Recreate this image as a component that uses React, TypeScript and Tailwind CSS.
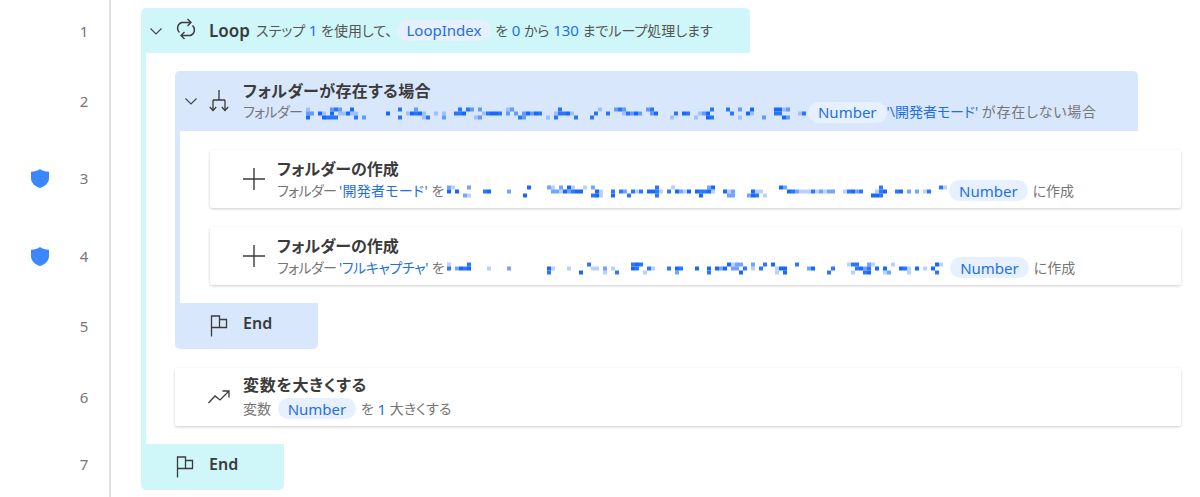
import React from "react";

const FONT = "font-['Noto_Sans','Noto_Sans_CJK_JP',sans-serif]";
const PALT = "[font-feature-settings:'palt']";

// pixelated (redacted) path text, seeded so it stays the same every run
function Mosaic({ width, seed, sparse = [] }: { width: number; seed: number; sparse?: [number, number][] }) {
  const cells: React.ReactNode[] = [];
  let s = seed;
  const rnd = () => {
    s = (s * 16807) % 2147483647;
    return s / 2147483647;
  };
  const step = 4;
  const prev = [false, false, false];
  for (let col = 0; col * step < width - step; col++) {
    const x = col * step;
    const thin = sparse.some(([a, b]) => x >= a && x < b);
    for (let row = 0; row < 3; row++) {
      let chance = row === 1 ? 0.46 : 0.16;
      if (prev[row]) chance += 0.14;
      if (thin) chance *= col % 5 === 0 ? 1.4 : 0.1;
      const on = rnd() < chance;
      prev[row] = on;
      if (on) {
        const o = [0.3, 0.6, 0.9, 1][Math.floor(rnd() * 4)];
        cells.push(<rect key={`${col}-${row}`} x={x} y={1.500 + row * 4} width={step} height={4} fill="#1668ff" opacity={o} />);
      }
    }
  }
  return (
    <svg width={width} height={15} viewBox={`0 0 ${width} 15`} className="inline-block shrink-0">
      {cells}
    </svg>
  );
}

const Pill = ({ children, className = "" }: { children: React.ReactNode; className?: string }) => (
  <span className={`inline-flex items-center h-[21px] rounded-full bg-[#e6f0ff] text-[#1f6fe5] px-[10px] text-[15px] tracking-normal ${className}`}>{children}</span>
);

const Val = ({ children, className = "" }: { children: React.ReactNode; className?: string }) => <span className={`text-[#1f6fe5] ${className}`}>{children}</span>;
const Num = ({ children }: { children: React.ReactNode }) => <span className="text-[#1f6fe5] text-[15px]">{children}</span>;

const Chevron = () => (
  <svg width="14" height="14" viewBox="0 0 14 14" fill="none" stroke="#444" strokeWidth="1.1" className="shrink-0">
    <path d="M1.500 4.500 7 10l5.500-5.500" />
  </svg>
);

const LoopIcon = () => (
  <svg width="22" height="22" viewBox="0 0 22 22" fill="none" stroke="#3b3b3b" strokeWidth="1.4" className="shrink-0">
    <path d="M4.500 14.500A6 6 0 0 1 6.500 4.500h9" />
    <path d="M17.500 7.500A6 6 0 0 1 15.500 17.500h-9" />
    <path d="M12.500 1l3.500 3.500-3.500 3.500M9.500 14l-3.500 3.500 3.500 3.500" />
  </svg>
);

const BranchIcon = () => (
  <svg width="20" height="22" viewBox="0 0 20 22" fill="none" stroke="#3b3b3b" strokeWidth="1.3" className="shrink-0">
    <path d="M10 0v10M4 10h12M4 10v10.500M16 10v10.500" />
    <path d="M.8 17l3.200 3.500L7.200 17M12.800 17l3.200 3.500 3.200-3.500" />
  </svg>
);

const PlusIcon = () => (
  <svg width="22" height="22" viewBox="0 0 22 22" fill="none" stroke="#3b3b3b" strokeWidth="1.4" className="shrink-0">
    <path d="M11 0v22M0 11h22" />
  </svg>
);

const FlagIcon = () => (
  <svg width="18" height="22" viewBox="0 0 18 22" fill="none" stroke="#3b3b3b" strokeWidth="1.3" className="shrink-0">
    <path d="M1.500 21.500V1h8v3.500h7v8h-7V4.500M1.500 12.500h8" />
  </svg>
);

const TrendIcon = () => (
  <svg width="22" height="14" viewBox="0 0 22 14" fill="none" stroke="#3b3b3b" strokeWidth="1.3" className="shrink-0">
    <path d="M.5 13 7 6l5 4 9-9M14.500 1H21v6.500" />
  </svg>
);

const Shield = () => (
  <svg width="18" height="19" viewBox="0 0 18 19" className="shrink-0">
    <path d="M9 0c2.500 1.800 5.300 2.700 9 2.700V9c0 4.500-3.200 8-9 10C3.200 17 0 13.500 0 9V2.700C3.700 2.700 6.500 1.800 9 0z" fill="#3a87ff" />
  </svg>
);

function Gutter() {
  const rows = [
    { n: 1, h: "h-[46px] mt-[8px]" },
    { n: 2, h: "h-[60px] mt-[17px]" },
    { n: 3, h: "h-[57px] mt-[19px]", shield: true },
    { n: 4, h: "h-[59px] mt-[20px]", shield: true },
    { n: 5, h: "h-[46px] mt-[17px]" },
    { n: 6, h: "h-[58px] mt-[19px]" },
    { n: 7, h: "h-[43px] mt-[17px]" },
  ];
  return (
    <div className="w-[111px] shrink-0 border-r-2 border-[#e1e1e1] h-[497px]">
      {rows.map((r) => (
        <div key={r.n} className={`flex items-center ${r.h}`}>
          <div className="w-[31px] shrink-0" />
          <div className="w-[18px] shrink-0 flex">{r.shield && <Shield />}</div>
          <div className="w-[30px] shrink-0" />
          <span className="text-[15px] text-[#767676] w-[10px] text-center">{r.n}</span>
        </div>
      ))}
    </div>
  );
}

const FolderLabel = () => <span className="tracking-[-0.6px] mr-[3px]">フォルダー</span>;

function CreateCard({ name, seed, sparse, nameClass, mosaic }: { name: string; seed: number; sparse: [number, number][]; nameClass: string; mosaic: number }) {
  return (
    <div className="h-[58px] bg-white rounded-[2px] shadow-[0_1px_3px_rgba(0,0,0,0.2)] flex items-center pl-[33px]">
      <PlusIcon />
      <div className="ml-[12px] mt-[1px]">
        <div className={`text-[16px] font-semibold text-[#3b3b3b] leading-[22px] ${PALT}`}>フォルダーの作成</div>
        <div className={`text-[14px] text-[#757575] leading-[20px] flex items-center whitespace-nowrap ${PALT}`}>
          <FolderLabel />&nbsp;<Val className={`-ml-[4px] ${nameClass}`}>{name}</Val>&nbsp;を&nbsp;
          <div className="-ml-[1px]">
            <Mosaic width={mosaic} seed={seed} sparse={sparse} />
          </div>
          <Pill className="ml-[1px] mr-[5px]">Number</Pill>に作成
        </div>
      </div>
    </div>
  );
}

const EndRow = ({ bg }: { bg: string }) => (
  <div className={`w-[143px] h-[46px] rounded-b-[5px] flex items-center pl-[35px] ${bg}`}>
    <FlagIcon />
    <span className="ml-[15px] mb-[6px] text-[16px] font-semibold text-[#3b3b3b]">End</span>
  </div>
);

export default function App() {
  return (
    <div className={`w-[1200px] h-[497px] overflow-hidden bg-white flex ${FONT}`}>
      <Gutter />
      <div className="flex-1 pl-[30px] pr-[19px] pt-[8px]">
        {/* Loop header */}
        <div className="w-[609px] h-[45px] bg-[#cff7f9] rounded-t-[5px] flex items-center pl-[8px] whitespace-nowrap">
          <Chevron />
          <div className="ml-[12px] mt-[-3px]"><LoopIcon /></div>
          <span className="ml-[12px] text-[17px] font-semibold text-[#3b3b3b]">Loop</span>
          <span className={`ml-[6px] text-[14px] text-[#555] flex items-center ${PALT}`}>
            ステップ&nbsp;<Num>1</Num>&nbsp;を使用して、
            <Pill className="ml-[4px]">LoopIndex</Pill>
            &nbsp;を&nbsp;<Num>0</Num>&nbsp;から&nbsp;<Num>130</Num>&nbsp;までループ処理します
          </span>
        </div>

        {/* Loop body */}
        <div className="border-l-[5px] border-[#cff7f9] pl-[29px] pt-[18px] pb-[18px]">
          {/* If header */}
          <div className="w-[963px] h-[60px] bg-[#d9e7fd] rounded-t-[5px] flex items-center pl-[9px] whitespace-nowrap">
            <Chevron />
            <div className="ml-[11px]"><BranchIcon /></div>
            <div className="ml-[14px]">
              <div className={`text-[16px] font-semibold text-[#3b3b3b] leading-[22px] tracking-[0.4px] ${PALT}`}>フォルダーが存在する場合</div>
              <div className={`text-[14px] text-[#757575] leading-[20px] flex items-center ${PALT}`}>
                <FolderLabel />&nbsp;
                <div className="-ml-[3px]">
                  <Mosaic width={502} seed={77} />
                </div>
                <Pill className="bg-[#e4eeff]">Number</Pill>
                <Val>'\開発者モード'</Val>&nbsp;<span className="tracking-[0.8px]">が存在しない場合</span>
              </div>
            </div>
          </div>

          {/* If body */}
          <div className="border-l-[5px] border-[#d9e7fd] pl-[30px] pt-[19px] pb-[18px] flex flex-col gap-[19px]">
            <CreateCard name="'開発者モード'" seed={1234} sparse={[[20, 90]]} nameClass="tracking-[0.3px]" mosaic={501} />
            <CreateCard name="'フルキャプチャ'" seed={9876} sparse={[[15, 140]]} nameClass="tracking-[-0.4px]" mosaic={502} />
          </div>

          <EndRow bg="bg-[#d9e7fd]" />

          {/* Increment */}
          <div className="mt-[19px] h-[58px] bg-white rounded-[2px] shadow-[0_1px_3px_rgba(0,0,0,0.2)] flex items-center pl-[33px]">
            <TrendIcon />
            <div className="ml-[13px]">
              <div className={`text-[16px] font-semibold text-[#3b3b3b] leading-[22px] -mt-[1px] tracking-[0.7px] ${PALT}`}>変数を大きくする</div>
              <div className={`text-[14px] text-[#757575] leading-[20px] mt-[2px] flex items-center whitespace-nowrap ${PALT}`}>
                変数&nbsp;<Pill className="ml-[3px] mr-[1px]">Number</Pill>&nbsp;を&nbsp;<Num>1</Num>&nbsp;<span className="tracking-[0.2px]">大きくする</span>
              </div>
            </div>
          </div>
        </div>

        {/* Loop end */}
        <EndRow bg="bg-[#cff7f9]" />
      </div>
    </div>
  );
}
